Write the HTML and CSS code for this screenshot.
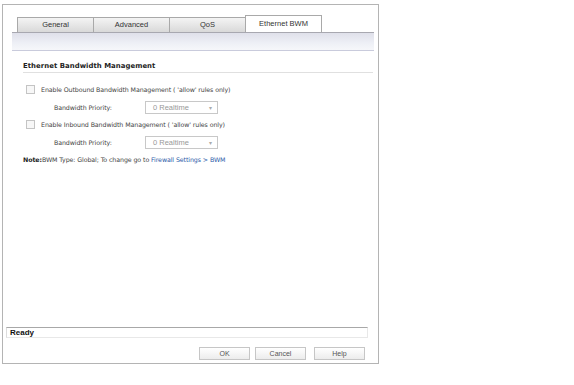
FILE: index.html
```html
<!DOCTYPE html>
<html lang="en">
<head>
  <meta charset="UTF-8" />
  <title>Ethernet BWM</title>
  <link rel="stylesheet" href="styles.css">
</head>
<body>
  <div class="window">
    <div class="tabs">
      <div class="tab">General</div>
      <div class="tab">Advanced</div>
      <div class="tab">QoS</div>
      <div class="tab active">Ethernet BWM</div>
    </div>
    <div class="band"></div>

    <div class="content">
      <div class="heading">Ethernet Bandwidth Management</div>

      <div class="row first">
        <span class="box"></span>
        <span>Enable Outbound Bandwidth Management ( 'allow' rules only)</span>
      </div>
      <div class="row">
        <span class="label">Bandwidth Priority:</span>
        <span class="select">0 Realtime <span class="arrow">&#9662;</span></span>
      </div>
      <div class="row">
        <span class="box"></span>
        <span>Enable Inbound Bandwidth Management ( 'allow' rules only)</span>
      </div>
      <div class="row">
        <span class="label">Bandwidth Priority:</span>
        <span class="select">0 Realtime <span class="arrow">&#9662;</span></span>
      </div>
      <div class="row note">
        <b>Note:</b>BWM Type: Global; To change go to&nbsp;<a href="#">Firewall Settings &gt; BWM</a>
      </div>
    </div>

    <div class="status">Ready</div>
    <div class="actions">
      <button>OK</button>
      <button>Cancel</button>
      <button class="help">Help</button>
    </div>
  </div>
</body>
</html>
```

FILE: styles.css
```css
* {
  box-sizing: border-box;
}

body {
  margin: 0;
  background: #fff;
  font-family: "DejaVu Sans", sans-serif;
}

.window {
  margin: 4px 0 0 2px;
  width: 377px;
  height: 360px;
  border: 1px solid #b4b4b4;
  display: flex;
  flex-direction: column;
}

.tabs {
  display: flex;
  align-items: flex-end;
  margin: 10px 0 0 14px;
  height: 17px;
}

.tab {
  width: 77px;
  height: 15px;
  border: 1px solid #a9a9a9;
  border-bottom: none;
  margin-right: -1px;
  background: linear-gradient(#f4f4f4, #d9d9d9);
  font-family: "Liberation Sans", Arial, sans-serif;
  font-size: 7.5px;
  color: #333;
  text-align: center;
  line-height: 14px;
}

.tab.active {
  height: 17px;
  background: #fff;
  line-height: 15px;
}

.band {
  margin: 0 4px 0 9px;
  height: 19px;
  border-top: 1px solid #a8a8b0;
  border-bottom: 1px solid #c9cbdc;
  background: linear-gradient(#dfe0ea, #eef0f6 60%, #f6f7fa);
}

.content {
  padding: 0 5px 0 20px;
}

.heading {
  margin-top: 10px;
  height: 12px;
  border-bottom: 1px solid #e0e0e0;
  font-weight: bold;
  font-size: 6.9px;
  color: #222;
  line-height: 10px;
  letter-spacing: 0.05px;
}

.row {
  display: flex;
  align-items: center;
  height: 17.5px;
  font-size: 6.3px;
  color: #444;
  letter-spacing: -0.1px;
}

.row.first {
  margin-top: 8px;
}

.box {
  width: 9px;
  height: 9px;
  border: 1px solid #c4c4c4;
  background: #f7f7f7;
  margin: 0 6px 0 3px;
}

.label {
  width: 122px;
  padding-left: 31px;
}

.select {
  width: 73px;
  height: 13px;
  border: 1px solid #c8c8c8;
  display: flex;
  align-items: center;
  justify-content: space-between;
  padding: 0 5px 0 7px;
  font-family: "Liberation Sans", Arial, sans-serif;
  font-size: 7.5px;
  color: #999;
  letter-spacing: 0;
}

.arrow {
  font-size: 6px;
  color: #aaa;
}

.note b {
  color: #222;
}

.note a {
  color: #2b5aa8;
  text-decoration: none;
}

.status {
  margin: auto 10px 0 3px;
  height: 11px;
  border-top: 1px solid #a8a8a8;
  border-left: 1px solid #dcdcdc;
  border-right: 1px solid #e8e8e8;
  border-bottom: 1px solid #e8e8e8;
  padding-left: 3px;
  font-family: "Liberation Sans", Arial, sans-serif;
  font-weight: bold;
  font-size: 8px;
  line-height: 10px;
  color: #111;
}

.actions {
  display: flex;
  justify-content: flex-end;
  gap: 5px;
  padding: 9px 13px 3px 0;
}

.actions button {
  width: 51px;
  height: 13px;
  padding: 0;
  border: 1px solid #c6c6c6;
  background: linear-gradient(#ffffff, #ececec);
  font-family: "Liberation Sans", Arial, sans-serif;
  font-size: 7px;
  color: #555;
}

.actions .help {
  margin-left: 3px;
}
```
